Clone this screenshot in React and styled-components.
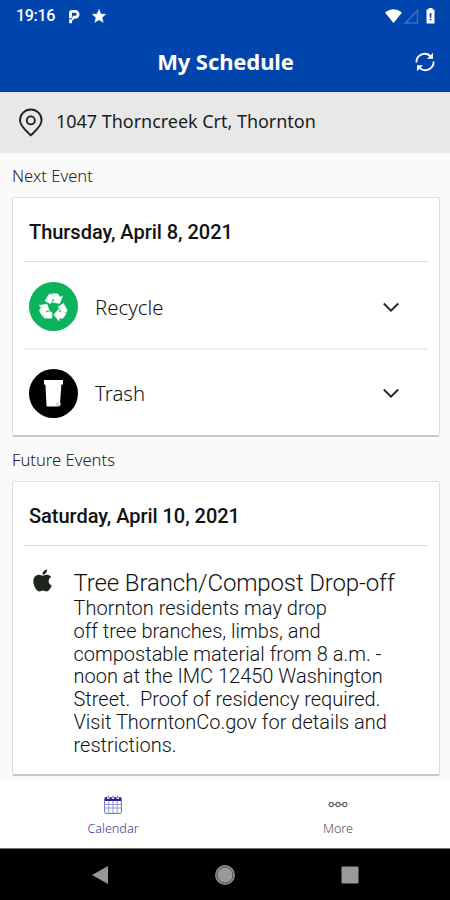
import React from 'react';
import styled, { createGlobalStyle } from 'styled-components';
import { FaApple } from 'react-icons/fa';

const GlobalStyle = createGlobalStyle`
  * {
    box-sizing: border-box;
  }
  body {
    margin: 0;
    background: #fafafa;
  }
  h1, h2, h3, p {
    margin: 0;
  }
  svg {
    display: block;
    flex: none;
  }
  button {
    padding: 0;
    border: 0;
    background: none;
    font: inherit;
    color: inherit;
  }
`;

const Screen = styled.div`
  width: 450px;
  height: 900px;
  display: flex;
  flex-direction: column;
  overflow: hidden;
  background: #fafafa;
  font-family: 'Noto Sans', sans-serif;
`;

const StatusBar = styled.div`
  height: 32px;
  flex: none;
  display: flex;
  align-items: center;
  padding: 0 14px 0 16px;
  background: #0045ad;
  color: #fff;
  .time {
    width: 52px;
    font: 500 16px/32px Roboto, sans-serif;
    letter-spacing: -0.3px;
    white-space: nowrap;
  }
  .notifications {
    display: flex;
    align-items: center;
    gap: 11px;
  }
  .status {
    margin-left: auto;
  }
`;

const Header = styled.header`
  height: 60px;
  flex: none;
  display: grid;
  grid-template-columns: 50px 1fr 50px;
  align-items: center;
  background: #0045ad;
  border-bottom: 1px solid #003c9b;
  color: #fff;
  h1 {
    padding: 0 0 2px 1px;
    font-size: 22px;
    font-weight: 700;
    line-height: 30px;
    text-align: center;
    white-space: nowrap;
    letter-spacing: -0.1px;
  }
  button {
    justify-self: center;
  }
`;

const AddressBar = styled.div`
  height: 61px;
  flex: none;
  display: flex;
  align-items: center;
  gap: 12px;
  padding: 0 0 4px 18px;
  background: #e8e8e8;
  color: #1c1c1c;
  font-size: 18px;
  letter-spacing: -0.03px;
  svg {
    margin-top: 4px;
  }
`;

const Content = styled.main`
  height: 628px;
  flex: none;
  padding: 0 10px 0 12px;
`;

const SectionLabel = styled.h3`
  height: 44px;
  padding-top: 12px;
  font-size: 16.6px;
  font-weight: 300;
  line-height: 22px;
  color: #222;
`;

const Card = styled.section`
  height: ${({ $height }) => $height}px;
  padding: 0 11px;
  background: #fff;
  border: 1px solid #dedede;
  border-bottom: 2px solid #c6c6c6;
  border-radius: 2px;
`;

const CardDate = styled.h2`
  height: 64px;
  padding: 4px 0 0 5px;
  border-bottom: 1px solid #dcdcdc;
  font: 500 20px/61px Roboto, sans-serif;
  letter-spacing: -0.03px;
  color: #111;
`;

const PickupRow = styled.div`
  height: ${({ $height }) => $height}px;
  display: flex;
  align-items: center;
  padding: 3px 28px 0 5px;
  & + & {
    border-top: 2px solid #eee;
    padding-top: 1px;
  }
  .name {
    flex: 1;
    padding-left: 17px;
    font-size: 20.4px;
    font-weight: 300;
    color: #111;
  }
`;

const Badge = styled.div`
  width: 49px;
  height: 49px;
  display: flex;
  align-items: center;
  justify-content: center;
  border-radius: 50%;
  background: ${({ $color }) => $color};
`;

const EventDetails = styled.div`
  display: flex;
  padding-top: 23px;
  font-family: Roboto, sans-serif;
  color: #111;
  .icon {
    width: 49.5px;
    padding-left: 6px;
    color: #1c241c;
  }
  .icon svg {
    margin-top: -1px;
  }
  h3 {
    font-size: 24px;
    font-weight: 300;
    line-height: 28px;
    letter-spacing: -0.13px;
    white-space: nowrap;
  }
  p {
    font-size: 20px;
    font-weight: 300;
    line-height: 22.8px;
    white-space: pre;
  }
`;

const TabBar = styled.nav`
  height: 67px;
  flex: none;
  display: grid;
  grid-template-columns: 1fr 1fr;
  background: #fff;
`;

const Tab = styled.button`
  display: flex;
  flex-direction: column;
  align-items: center;
  padding-top: 14px;
  color: ${({ $active }) => ($active ? '#3838a0' : '#555')};
  span {
    margin-top: 6px;
    padding-left: 1px;
    font-size: 12.6px;
    font-weight: 300;
    line-height: 18px;
  }
`;

const SystemNav = styled.div`
  height: 52px;
  flex: none;
  display: grid;
  grid-template-columns: 125px 125px 125px;
  justify-content: center;
  justify-items: center;
  align-items: center;
  background: #000;
  border-top: 1px solid #777;
`;

const ParkingIcon = () => (
  <svg width="13" height="15" viewBox="0 0 13 15" fill="none" stroke="#fff" strokeWidth="2.900">
    <path d="M2.500 9.300V4q0-1.600 1.600-1.600h3a2.900 2.900 0 0 1 0 5.900H4.800" />
    <path d="M2.600 10.200v4" />
    <path d="M4.800 8v3.300" strokeWidth="1.600" />
  </svg>
);

const StarIcon = () => (
  <svg width="14" height="14" viewBox="0 0 14 14">
    <path d="M7 .3l1.900 4.600 4.900.4-3.700 3.200 1.100 4.900L7 10.800l-4.200 2.600 1.100-4.900L.2 5.300l4.900-.4z" fill="#fff" stroke="#fff" strokeWidth=".4" />
  </svg>
);

const StatusIcons = () => (
  <svg width="52" height="18" viewBox="0 0 52 18">
    <path d="M1 5.400Q9.500-1 18 5.400L9.500 16z" fill="#fff" />
    <path d="M33.500 3.700v12.400H21.300z" fill="none" stroke="#3b6dbd" strokeWidth="1.500" />
    <path d="M42.500 2.600h2V1h4v1.600h2v14h-8v-14z" fill="#fff" />
    <path d="M45.700 6h1.700v4.800h-1.700zM45.700 12h1.700v1.500h-1.700z" fill="#0045ad" />
  </svg>
);

const RefreshIcon = () => (
  <svg width="20" height="20" viewBox="0 0 20 20" fill="none" stroke="#fff" strokeWidth="1.800">
    <path d="M1.400 10.400A8.400 8.400 0 0 1 16 4.600M18.600 9.600A8.400 8.400 0 0 1 4 15.400" />
    <path d="M18 .8v6h-6zM2 19.200v-6h6z" fill="#fff" stroke="none" />
  </svg>
);

const PinIcon = () => (
  <svg width="26" height="29" viewBox="0 0 26 29" fill="none" stroke="#222" strokeWidth="1.900">
    <path d="M12.800 27.200C8.600 23.200 2 18.500 2 12.300a10.800 10.800 0 0 1 21.600 0c0 6.200-6.600 10.900-10.800 14.900z" />
    <circle cx="12.800" cy="12.400" r="4" />
  </svg>
);

// one folded arrow, repeated three times around the centre
const RecycleIcon = () => (
  <svg width="31" height="30" viewBox="0 0 30 29" fill="#fff" stroke="#fff" strokeWidth=".5">
    {[0, 120, 240].map((angle) => (
      <g key={angle} transform={`rotate(${angle} 15 15)`}>
        <path d="M6.800 8.600L10 3.200Q11 1.700 12.700 2L15 5.600 12 11.400z" />
        <path d="M13.600 1.600H18q1.300 0 2 1.200l1.300 2.300 2.400-1.300-2.800 7.400-7.400-1.400 2.400-1.400z" />
      </g>
    ))}
  </svg>
);

const BinIcon = () => (
  <svg width="21" height="29" viewBox="0 0 21 29">
    <path d="M1 1h19v4.500h-1.600l-1.300 17.800a2.500 2.500 0 0 1-2 4.200H3.600L2.400 5.500H1z" fill="#fff" />
    <circle cx="14.800" cy="25.200" r="1.300" fill="none" stroke="#999" strokeWidth=".6" />
  </svg>
);

const ChevronIcon = () => (
  <svg width="18" height="12" viewBox="0 0 18 12" fill="none" stroke="#222" strokeWidth="1.800">
    <path d="M1.800 2.500L9 9.700l7.200-7.200" />
  </svg>
);

const CalendarIcon = () => (
  <svg width="18" height="19" viewBox="0 0 18 19">
    <rect x=".6" y="2.500" width="16.800" height="15.900" rx="1" fill="none" stroke="#6a6abd" />
    <path d="M1 2.300h16V6H1z" fill="#24249c" />
    <path d="M4.200.5v3.500M9 .5v3.500M13.800.5v3.500" stroke="#fff" strokeWidth="2.400" />
    <path d="M4.200.6v2.800M9 .6v2.800M13.800.6v2.800" stroke="#5252b2" strokeWidth="1" />
    <path d="M1 9.500h16M1 13h16M4.800 6v12M9 6v12M13.200 6v12" stroke="#8b8bcb" strokeWidth=".9" />
  </svg>
);

const MoreIcon = () => (
  <svg width="20" height="19" viewBox="0 0 20 19" fill="none" stroke="#666" strokeWidth="1.200">
    <circle cx="3.200" cy="9.500" r="2.100" />
    <circle cx="10" cy="9.500" r="2.100" />
    <circle cx="16.800" cy="9.500" r="2.100" />
    <path d="M5.300 9.500h2.600M12.100 9.500h2.600" />
  </svg>
);

const details = `Thornton residents may drop
off tree branches, limbs, and
compostable material from 8 a.m. -
noon at the IMC 12450 Washington
Street.  Proof of residency required.
Visit ThorntonCo.gov for details and
restrictions.`;

export default function App() {
  return (
    <Screen>
      <GlobalStyle />
      <StatusBar>
        <span className="time">19:16</span>
        <div className="notifications">
          <ParkingIcon />
          <StarIcon />
        </div>
        <div className="status">
          <StatusIcons />
        </div>
      </StatusBar>
      <Header>
        <span />
        <h1>My Schedule</h1>
        <button aria-label="Refresh">
          <RefreshIcon />
        </button>
      </Header>
      <AddressBar>
        <PinIcon />
        <span>1047 Thorncreek Crt, Thornton</span>
      </AddressBar>
      <Content>
        <SectionLabel>Next Event</SectionLabel>
        <Card $height={240}>
          <CardDate>Thursday, April 8, 2021</CardDate>
          <PickupRow $height={86}>
            <Badge $color="#0bb45a">
              <RecycleIcon />
            </Badge>
            <span className="name">Recycle</span>
            <ChevronIcon />
          </PickupRow>
          <PickupRow $height={87}>
            <Badge $color="#000">
              <BinIcon />
            </Badge>
            <span className="name">Trash</span>
            <ChevronIcon />
          </PickupRow>
        </Card>
        <SectionLabel>Future Events</SectionLabel>
        <Card $height={295}>
          <CardDate>Saturday, April 10, 2021</CardDate>
          <EventDetails>
            <div className="icon">
              <FaApple size={25} />
            </div>
            <div>
              <h3>Tree Branch/Compost Drop-off</h3>
              <p>{details}</p>
            </div>
          </EventDetails>
        </Card>
      </Content>
      <TabBar>
        <Tab $active>
          <CalendarIcon />
          <span>Calendar</span>
        </Tab>
        <Tab>
          <MoreIcon />
          <span>More</span>
        </Tab>
      </TabBar>
      <SystemNav>
        <svg width="18" height="20" viewBox="0 0 18 20">
          <path d="M17 1v18L1 10z" fill="#969696" />
        </svg>
        <svg width="22" height="22" viewBox="0 0 22 22">
          <circle cx="11" cy="11" r="10" fill="#8c8c8c" />
          <circle cx="11" cy="11" r="8" fill="#999" stroke="#555" strokeWidth="1" />
        </svg>
        <svg width="18" height="18" viewBox="0 0 18 18">
          <rect x=".5" y=".5" width="17" height="17" rx="1" fill="#999" />
        </svg>
      </SystemNav>
    </Screen>
  );
}
